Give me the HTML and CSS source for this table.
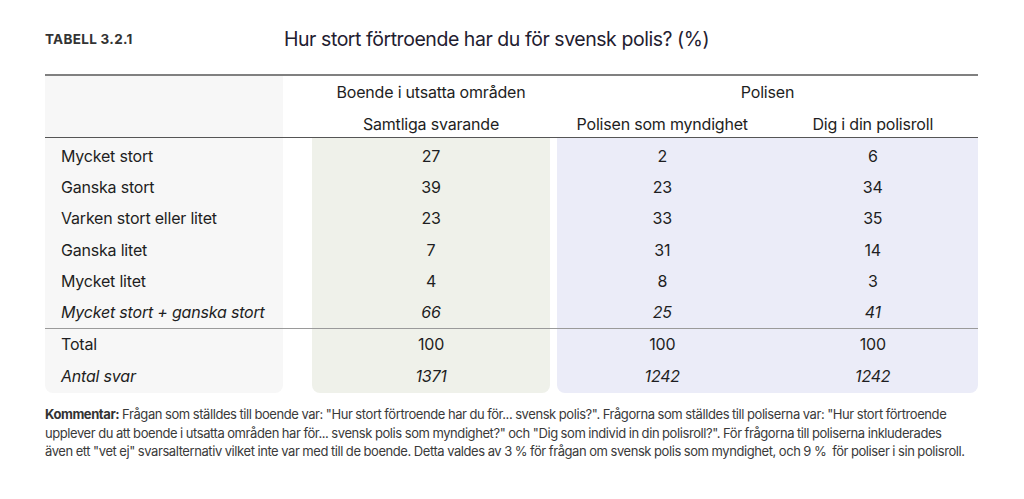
FILE: index.html
```html
<!DOCTYPE html>
<html lang="sv">
<head>
<meta charset="utf-8">
<title>Tabell 3.2.1</title>
<link rel="stylesheet" href="styles.css">
</head>
<body>
<div class="page">
  <header class="head">
    <div class="label">TABELL 3.2.1</div>
    <h1 class="title">Hur stort förtroende har du för svensk polis? (%)</h1>
  </header>
  <div class="rule-top"></div>
  <div class="table">
    <div class="bg bg-label"></div>
    <div class="bg bg-green"></div>
    <div class="bg bg-blue"></div>

    <div class="c h1 col-a">Boende i utsatta områden</div>
    <div class="c h1 col-bc">Polisen</div>
    <div class="c h2 col-a">Samtliga svarande</div>
    <div class="c h2 col-b">Polisen som myndighet</div>
    <div class="c h2 col-c">Dig i din polisroll</div>
    <div class="line line-dark r-line1"></div>

    <div class="c lab r1">Mycket stort</div><div class="c col-a r1">27</div><div class="c col-b r1">2</div><div class="c col-c r1">6</div>
    <div class="c lab r2">Ganska stort</div><div class="c col-a r2">39</div><div class="c col-b r2">23</div><div class="c col-c r2">34</div>
    <div class="c lab r3">Varken stort eller litet</div><div class="c col-a r3">23</div><div class="c col-b r3">33</div><div class="c col-c r3">35</div>
    <div class="c lab r4">Ganska litet</div><div class="c col-a r4">7</div><div class="c col-b r4">31</div><div class="c col-c r4">14</div>
    <div class="c lab r5">Mycket litet</div><div class="c col-a r5">4</div><div class="c col-b r5">8</div><div class="c col-c r5">3</div>
    <div class="c lab r6 it">Mycket stort + ganska stort</div><div class="c col-a r6 it">66</div><div class="c col-b r6 it">25</div><div class="c col-c r6 it">41</div>
    <div class="line line-mid r-line2"></div>
    <div class="c lab r7">Total</div><div class="c col-a r7">100</div><div class="c col-b r7">100</div><div class="c col-c r7">100</div>
    <div class="c lab r8 it">Antal svar</div><div class="c col-a r8 it">1371</div><div class="c col-b r8 it">1242</div><div class="c col-c r8 it">1242</div>
  </div>
  <p class="note"><b class="note-key">Kommentar:</b> Frågan som ställdes till boende var: "Hur stort förtroende har du för... svensk polis?". Frågorna som ställdes till poliserna var: "Hur stort förtroende upplever du att boende i utsatta områden har för... svensk polis som myndighet?" och "Dig som individ in din polisroll?". För frågorna till poliserna inkluderades<br>även ett "vet ej" svarsalternativ vilket inte var med till de boende. Detta valdes av 3&nbsp;% för frågan om svensk polis som myndighet, och 9&nbsp;%&nbsp; för poliser i sin polisroll.</p>
</div>
</body>
</html>
```

FILE: styles.css
```css
* { box-sizing: border-box; }
html, body { margin: 0; padding: 0; background: #fff; }
body {
  font-family: Inter, "Liberation Sans", sans-serif;
  color: #1e1e22;
}
.page {
  width: 933px;
  margin-left: 45px;
  padding-top: 25px;
}
.head {
  display: grid;
  grid-template-columns: 239px 1fr;
  align-items: center;
  height: 28px;
}
.label {
  font-size: 13.5px;
  font-weight: 700;
  letter-spacing: 0.3px;
  color: #333;
}
.title {
  margin: 0;
  font-size: 19.5px;
  font-weight: 400;
  letter-spacing: -0.45px;
  color: #1f2030;
}
.rule-top {
  margin-top: 21px;
  height: 2px;
  background: #808080;
}
.table {
  display: grid;
  grid-template-columns: 238px 29px 238px 7px 210.5px 210.5px;
  grid-template-rows: 30px 31px 1px 2px repeat(6, 31.3px) 1px 31.3px 31.3px 2px;
  font-size: 16px;
  letter-spacing: -0.2px;
}
.bg { border-radius: 0 0 8px 8px; }
.bg-label { grid-column: 1; grid-row: 1 / -1; background: #f7f7f7; }
.bg-green { grid-column: 3; grid-row: 3 / -1; background: #eff1ea; }
.bg-blue  { grid-column: 5 / 7; grid-row: 3 / -1; background: #ebecf8; }
.c {
  display: flex;
  align-items: center;
  justify-content: center;
  white-space: nowrap;
}
.lab { grid-column: 1; justify-content: flex-start; padding-left: 16px; }
.col-a { grid-column: 3; }
.col-b { grid-column: 5; }
.col-c { grid-column: 6; }
.col-bc { grid-column: 5 / 7; }
.h1 { grid-row: 1; padding-top: 1px; }
.h2 { grid-row: 2; padding-top: 4px; }
.line { grid-column: 1 / -1; }
.line-dark { background: #555; }
.line-mid { background: #9a9a9a; }
.r-line1 { grid-row: 3; }
.r1 { grid-row: 5; }
.r2 { grid-row: 6; }
.r3 { grid-row: 7; }
.r4 { grid-row: 8; }
.r5 { grid-row: 9; }
.r6 { grid-row: 10; }
.r-line2 { grid-row: 11; }
.r7 { grid-row: 12; }
.r8 { grid-row: 13; }
.it { font-style: italic; }
.note {
  margin: 12px 0 0;
  font-size: 13px;
  line-height: 18.5px;
  letter-spacing: -0.42px;
  word-spacing: -0.3px;
  color: #3a3a3a;
}
.note-key { font-weight: 700; color: #333; }
```
